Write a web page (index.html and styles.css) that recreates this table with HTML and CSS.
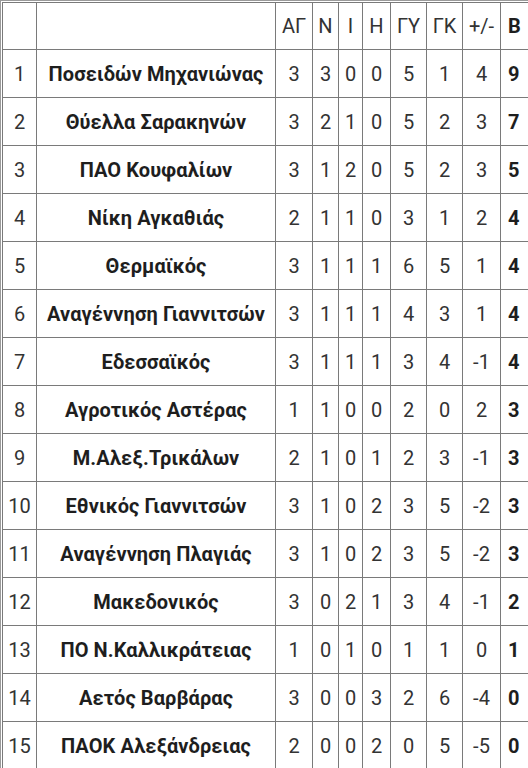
FILE: index.html
```html
<!DOCTYPE html>
<html lang="el">
<head>
<meta charset="utf-8">
<link rel="stylesheet" href="styles.css">
</head>
<body>
<div class="frame">
<table class="standings">
<colgroup>
<col class="c-pos"><col class="c-team"><col class="c-ag"><col class="c-n"><col class="c-i"><col class="c-h"><col class="c-gy"><col class="c-gk"><col class="c-diff"><col class="c-pts">
</colgroup>
<thead>
<tr><th></th><th></th><th>ΑΓ</th><th>Ν</th><th>Ι</th><th>Η</th><th>ΓΥ</th><th>ΓΚ</th><th>+/-</th><th class="pts">Β</th></tr>
</thead>
<tbody>
<tr><td>1</td><td class="team">Ποσειδών Μηχανιώνας</td><td>3</td><td>3</td><td>0</td><td>0</td><td>5</td><td>1</td><td>4</td><td class="pts">9</td></tr>
<tr><td>2</td><td class="team">Θύελλα Σαρακηνών</td><td>3</td><td>2</td><td>1</td><td>0</td><td>5</td><td>2</td><td>3</td><td class="pts">7</td></tr>
<tr><td>3</td><td class="team">ΠΑΟ Κουφαλίων</td><td>3</td><td>1</td><td>2</td><td>0</td><td>5</td><td>2</td><td>3</td><td class="pts">5</td></tr>
<tr><td>4</td><td class="team">Νίκη Αγκαθιάς</td><td>2</td><td>1</td><td>1</td><td>0</td><td>3</td><td>1</td><td>2</td><td class="pts">4</td></tr>
<tr><td>5</td><td class="team">Θερμαϊκός</td><td>3</td><td>1</td><td>1</td><td>1</td><td>6</td><td>5</td><td>1</td><td class="pts">4</td></tr>
<tr><td>6</td><td class="team">Αναγέννηση Γιαννιτσών</td><td>3</td><td>1</td><td>1</td><td>1</td><td>4</td><td>3</td><td>1</td><td class="pts">4</td></tr>
<tr><td>7</td><td class="team">Εδεσσαϊκός</td><td>3</td><td>1</td><td>1</td><td>1</td><td>3</td><td>4</td><td>-1</td><td class="pts">4</td></tr>
<tr><td>8</td><td class="team">Αγροτικός Αστέρας</td><td>1</td><td>1</td><td>0</td><td>0</td><td>2</td><td>0</td><td>2</td><td class="pts">3</td></tr>
<tr><td>9</td><td class="team">Μ.Αλεξ.Τρικάλων</td><td>2</td><td>1</td><td>0</td><td>1</td><td>2</td><td>3</td><td>-1</td><td class="pts">3</td></tr>
<tr><td>10</td><td class="team">Εθνικός Γιαννιτσών</td><td>3</td><td>1</td><td>0</td><td>2</td><td>3</td><td>5</td><td>-2</td><td class="pts">3</td></tr>
<tr><td>11</td><td class="team">Αναγέννηση Πλαγιάς</td><td>3</td><td>1</td><td>0</td><td>2</td><td>3</td><td>5</td><td>-2</td><td class="pts">3</td></tr>
<tr><td>12</td><td class="team">Μακεδονικός</td><td>3</td><td>0</td><td>2</td><td>1</td><td>3</td><td>4</td><td>-1</td><td class="pts">2</td></tr>
<tr><td>13</td><td class="team">ΠΟ Ν.Καλλικράτειας</td><td>1</td><td>0</td><td>1</td><td>0</td><td>1</td><td>1</td><td>0</td><td class="pts">1</td></tr>
<tr><td>14</td><td class="team">Αετός Βαρβάρας</td><td>3</td><td>0</td><td>0</td><td>3</td><td>2</td><td>6</td><td>-4</td><td class="pts">0</td></tr>
<tr><td>15</td><td class="team">ΠΑΟΚ Αλεξάνδρειας</td><td>2</td><td>0</td><td>0</td><td>2</td><td>0</td><td>5</td><td>-5</td><td class="pts">0</td></tr>
</tbody>
</table>
</div>
</body>
</html>
```

FILE: styles.css
```css
html, body {
  margin: 0;
  padding: 0;
  background: #ffffff;
  overflow: hidden;
}

body {
  width: 528px;
  height: 768px;
  font-family: Roboto, "Noto Sans", "DejaVu Sans", sans-serif;
  color: #333333;
}

.frame {
  display: inline-block;
  border: 1px solid #9a9a9a;
  padding: 1px;
  background: #fff;
}

.standings {
  border-collapse: collapse;
  table-layout: fixed;
  width: 560px;
  font-size: 20px;
}

.c-pos { width: 34px; }
.c-team { width: 239px; }
.c-ag { width: 37px; }
.c-n { width: 26px; }
.c-i { width: 24px; }
.c-h { width: 28px; }
.c-gy { width: 36px; }
.c-gk { width: 36px; }
.c-diff { width: 38px; }
.c-pts { width: 62px; }

.standings th,
.standings td {
  border: 1px solid #7a7a7a;
  text-align: center;
  padding: 0;
  height: 47px;
  white-space: nowrap;
  overflow: hidden;
}

.standings th {
  font-weight: 400;
  color: #333333;
  height: 46px;
}

.standings td.team {
  font-weight: 700;
  color: #1e1e1e;
  letter-spacing: 0.1px;
}

.standings .pts {
  font-weight: 700;
  color: #1e1e1e;
  text-align: left;
  padding-left: 7px;
}
```
